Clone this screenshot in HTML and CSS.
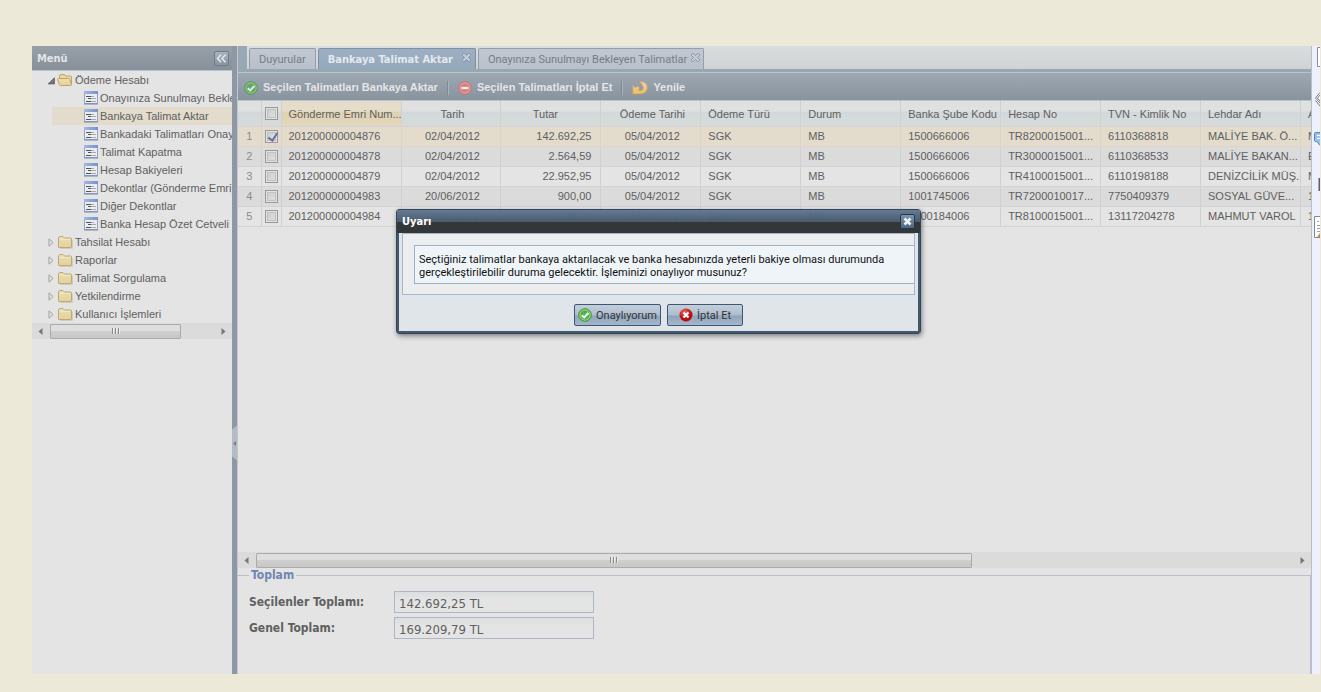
FILE: index.html
```html
<!DOCTYPE html>
<html lang="tr">
<head>
<meta charset="utf-8">
<title>Bankaya Talimat Aktar</title>
<link rel="stylesheet" href="styles.css">
</head>
<body>
<svg class="defs" width="0" height="0" aria-hidden="true">
  <defs>
    <linearGradient id="gold" x1="0" y1="0" x2="0" y2="1"><stop offset="0" stop-color="#e6e0b4"/><stop offset="1" stop-color="#e5d19c"/></linearGradient>
    <linearGradient id="blue" x1="0" y1="0" x2="1" y2="0"><stop offset="0" stop-color="#a3b8e2"/><stop offset="1" stop-color="#7890ce"/></linearGradient>
    <linearGradient id="orange" x1="0" y1="0" x2="0" y2="1"><stop offset="0" stop-color="#e4d3c0"/><stop offset="1" stop-color="#eac35c"/></linearGradient>
    <radialGradient id="redball" cx=".4" cy=".3"><stop offset="0" stop-color="#f06a5c"/><stop offset="1" stop-color="#b80c0c"/></radialGradient>
    <symbol id="folder" viewBox="0 0 16 16"><path d="M1.500 13V4q0-.5.500-1l.5-.5h3.500l1.500 1.500H13.500q1 0 1 1v8q0 .5-.5.500H2q-.5 0-.5-.5z" fill="url(#gold)" stroke="#c2a870"/><path d="M2.500 5.500h11" stroke="#f0e9c8"/><path d="M15.500 6v8.500H3" fill="none" stroke="#cfccc4"/></symbol>
    <symbol id="folder-open" viewBox="0 0 16 16"><path d="M2.500 13V4q0-1.500 1.500-1.500h3q1 0 1.500 1.500h5q1 0 1 1v8" fill="#e3d9a6" stroke="#c2a56c"/><path d="M.6 7.500q0-1 1-1h10q1 0 1.200 1l1.700 5q0 1-1 1h-10q-1 0-1.200-1z" fill="url(#gold)" stroke="#bfa464"/></symbol>
    <symbol id="form" viewBox="0 0 16 16"><path d="M1.500 1.500h13v12h-13z" fill="#e9ecf1" stroke="#96a4c2"/><path d="M1 1h14v3H1z" fill="url(#blue)"/><path d="M1 14h14" stroke="#7286ac"/><path d="M3 6.500h5M5 8.500h3M3 11.500h5" stroke="#555"/><path d="M8 6.500h3M8 8.500h5M8 11.500h5" stroke="#aaa"/></symbol>
    <symbol id="close" viewBox="0 0 9 9"><path d="M1.500.5h1l2 2 2-2h1l1 1v1l-2 2 2 2v1l-1 1h-1l-2-2-2 2h-1l-1-1v-1l2-2-2-2v-1z" fill="#c3ccd6" stroke="#77899c" stroke-width=".8"/></symbol>
    <symbol id="ok" viewBox="0 0 14 14"><circle cx="7" cy="7" r="6.300" fill="#54b14a" stroke="#3f9a38"/><circle cx="7" cy="7" r="5.200" fill="none" stroke="#a9dda2" stroke-width=".8"/><path d="M3.800 7.200l2.400 2.300 4.200-4.500" fill="none" stroke="#fff" stroke-width="1.900"/></symbol>
  </defs>
</svg>
<div class="app">
  <aside class="menu">
    <header class="menu-head"><h1>Menü</h1>
      <button class="fold" aria-label="Menüyü daralt"><svg width="11" height="9" viewBox="0 0 11 9"><path d="M5 .8L1.500 4.500 5 8.200M9.500.8L6 4.500l3.500 3.700" fill="none" stroke="#e4e8ec" stroke-width="1.500"/></svg></button>
    </header>
    <ul class="tree">
      <li><a href="#" class="branch"><svg class="arrow" viewBox="0 0 7 7"><path d="M6.500 1v5.500H1z" fill="#777" stroke="#555" stroke-width=".6"/></svg><svg class="ico"><use href="#folder-open"/></svg>Ödeme Hesabı</a>
        <ul>
          <li><a href="#"><svg class="ico"><use href="#form"/></svg>Onayınıza Sunulmayı Bekleyen Talimatlar</a></li>
          <li><a href="#" class="selected"><svg class="ico"><use href="#form"/></svg>Bankaya Talimat Aktar</a></li>
          <li><a href="#"><svg class="ico"><use href="#form"/></svg>Bankadaki Talimatları Onayla</a></li>
          <li><a href="#"><svg class="ico"><use href="#form"/></svg>Talimat Kapatma</a></li>
          <li><a href="#"><svg class="ico"><use href="#form"/></svg>Hesap Bakiyeleri</a></li>
          <li><a href="#"><svg class="ico"><use href="#form"/></svg>Dekontlar (Gönderme Emri)</a></li>
          <li><a href="#"><svg class="ico"><use href="#form"/></svg>Diğer Dekontlar</a></li>
          <li><a href="#"><svg class="ico"><use href="#form"/></svg>Banka Hesap Özet Cetveli</a></li>
        </ul>
      </li>
      <li><a href="#" class="branch"><svg class="arrow" viewBox="0 0 7 9"><path d="M1.500.8l4 3.700-4 3.700z" fill="none" stroke="#a0a0a0"/></svg><svg class="ico"><use href="#folder"/></svg>Tahsilat Hesabı</a></li>
      <li><a href="#" class="branch"><svg class="arrow" viewBox="0 0 7 9"><path d="M1.500.8l4 3.700-4 3.700z" fill="none" stroke="#a0a0a0"/></svg><svg class="ico"><use href="#folder"/></svg>Raporlar</a></li>
      <li><a href="#" class="branch"><svg class="arrow" viewBox="0 0 7 9"><path d="M1.500.8l4 3.700-4 3.700z" fill="none" stroke="#a0a0a0"/></svg><svg class="ico"><use href="#folder"/></svg>Talimat Sorgulama</a></li>
      <li><a href="#" class="branch"><svg class="arrow" viewBox="0 0 7 9"><path d="M1.500.8l4 3.700-4 3.700z" fill="none" stroke="#a0a0a0"/></svg><svg class="ico"><use href="#folder"/></svg>Yetkilendirme</a></li>
      <li><a href="#" class="branch"><svg class="arrow" viewBox="0 0 7 9"><path d="M1.500.8l4 3.700-4 3.700z" fill="none" stroke="#a0a0a0"/></svg><svg class="ico"><use href="#folder"/></svg>Kullanıcı İşlemleri</a></li>
    </ul>
    <div class="scroll">
      <svg class="tip" viewBox="0 0 5 7"><path d="M4.500 0v7L.5 3.500z" fill="#777"/></svg>
      <div class="track"><div class="thumb menu-thumb"><i></i><i></i><i></i></div></div>
      <svg class="tip" viewBox="0 0 5 7"><path d="M.5 0v7l4-3.500z" fill="#777"/></svg>
    </div>
  </aside>
  <div class="splitter"><button class="grip" aria-label="Daralt"><svg width="3" height="5" viewBox="0 0 3 5"><path d="M3 0v5L0 2.500z" fill="#75818d"/></svg></button></div>
  <main class="main">
    <nav class="tabs">
      <button class="tab">Duyurular</button>
      <button class="tab active">Bankaya Talimat Aktar<svg class="x"><use href="#close"/></svg></button>
      <button class="tab last">Onayınıza Sunulmayı Bekleyen Talimatlar<svg class="x"><use href="#close"/></svg></button>
    </nav>
    <div class="toolbar">
      <button><svg class="tool pale"><use href="#ok"/></svg>Seçilen Talimatları Bankaya Aktar</button>
      <span class="sep"></span>
      <button><svg class="tool" viewBox="0 0 14 14"><circle cx="7" cy="7" r="6.300" fill="#d58282" stroke="#c97070"/><circle cx="7" cy="7" r="5.200" fill="none" stroke="#e5b0ad" stroke-width=".8"/><path d="M3.500 7h7" stroke="#eee" stroke-width="2.200"/></svg>Seçilen Talimatları İptal Et</button>
      <span class="sep"></span>
      <button><svg class="tool wide" viewBox="0 0 16 14"><path d="M7.500.6Q15.200.4 15.400 6.300 15.200 12.600 8.300 13L.8 13V4.200L3.300 6.500Q4.800 5.400 5.800 5.200L7.800 7.200Q6.800 7.600 6.300 8.600L7.600 9.700Q11 9.400 11.200 7 11 4.200 7.500.6z" fill="url(#orange)" stroke="#cf9c5c" stroke-width=".8"/></svg>Yenile</button>
    </div>
    <div class="grid">
      <table>
        <colgroup><col class="c-num"><col class="c-check"><col class="c-order"><col><col><col><col><col><col><col><col><col><col></colgroup>
        <thead><tr><th></th><th class="check"><input type="checkbox" aria-label="Tümünü seç"></th><th class="sorted">Gönderme Emri Num...</th><th class="mid">Tarih</th><th class="amount">Tutar</th><th class="mid">Ödeme Tarihi</th><th>Ödeme Türü</th><th>Durum</th><th>Banka Şube Kodu</th><th>Hesap No</th><th>TVN - Kimlik No</th><th>Lehdar Adı</th><th>A</th></tr></thead>
        <tbody>
          <tr class="picked"><td class="num">1</td><td class="check"><input type="checkbox" aria-label="Satır 1" checked></td><td>201200000004876</td><td class="mid">02/04/2012</td><td class="right">142.692,25</td><td class="mid">05/04/2012</td><td>SGK</td><td>MB</td><td>1500666006</td><td>TR8200015001...</td><td>6110368818</td><td>MALİYE BAK. Ö...</td><td>M</td></tr>
          <tr class="alt"><td class="num">2</td><td class="check"><input type="checkbox" aria-label="Satır 2"></td><td>201200000004878</td><td class="mid">02/04/2012</td><td class="right">2.564,59</td><td class="mid">05/04/2012</td><td>SGK</td><td>MB</td><td>1500666006</td><td>TR3000015001...</td><td>6110368533</td><td>MALİYE BAKAN...</td><td>E</td></tr>
          <tr><td class="num">3</td><td class="check"><input type="checkbox" aria-label="Satır 3"></td><td>201200000004879</td><td class="mid">02/04/2012</td><td class="right">22.952,95</td><td class="mid">05/04/2012</td><td>SGK</td><td>MB</td><td>1500666006</td><td>TR4100015001...</td><td>6110198188</td><td>DENİZCİLİK MÜŞ...</td><td>M</td></tr>
          <tr class="alt"><td class="num">4</td><td class="check"><input type="checkbox" aria-label="Satır 4"></td><td>201200000004983</td><td class="mid">20/06/2012</td><td class="right">900,00</td><td class="mid">05/04/2012</td><td>SGK</td><td>MB</td><td>1001745006</td><td>TR7200010017...</td><td>7750409379</td><td>SOSYAL GÜVE...</td><td>1</td></tr>
          <tr><td class="num">5</td><td class="check"><input type="checkbox" aria-label="Satır 5"></td><td>201200000004984</td><td class="mid">20/06/2012</td><td class="right">100,00</td><td class="mid">05/04/2012</td><td>Diğer</td><td>MB</td><td>1500184006</td><td>TR8100015001...</td><td>13117204278</td><td>MAHMUT VAROL</td><td>1</td></tr>
        </tbody>
      </table>
    </div>
    <div class="scroll">
      <svg class="tip" viewBox="0 0 5 7"><path d="M4.500 0v7L.5 3.500z" fill="#777"/></svg>
      <div class="track"><div class="thumb grid-thumb"><i></i><i></i><i></i></div></div>
      <svg class="tip" viewBox="0 0 5 7"><path d="M.5 0v7l4-3.500z" fill="#777"/></svg>
    </div>
    <fieldset class="totals">
      <legend>Toplam</legend>
      <label for="sel">Seçilenler Toplamı:</label><input id="sel" type="text" value="142.692,25 TL" readonly>
      <label for="all">Genel Toplam:</label><input id="all" type="text" value="169.209,79 TL" readonly>
    </fieldset>
  </main>
  <div class="side">
    <svg width="8" height="24" viewBox="0 0 8 24"><path d="M8 1.500H5.500v19H8" fill="#fff" stroke="#8a8f98"/></svg>
    <svg width="8" height="24" viewBox="0 0 8 24"><path d="M8 4.500L3.500 10 8 15M3.500 12.500L8 18M8 7L5.500 10 8 13" fill="#fff" stroke="#777"/></svg>
    <svg width="8" height="24" viewBox="0 0 8 24"><path d="M8 2.500H3.500q-1 0-1 1v7q0 1 1 1h1.500l3 4" fill="#9cc0f0" stroke="#4c86cf"/><path d="M5 5.500h3M5 8.500h3" stroke="#fff"/></svg>
    <svg width="8" height="24" viewBox="0 0 8 24"><path d="M7.500 6v13" stroke="#55607a" stroke-width="2"/></svg>
    <svg width="8" height="24" viewBox="0 0 8 24"><path d="M8 2.500H2.500v21H8" fill="#fff" stroke="#888"/><path d="M5 7.500h2M5 11.500h3M5 14.500h3M5 17.500h3" stroke="#8aa4cc"/><path d="M8 19l-3 4h3z" fill="#d58b35"/></svg>
  </div>
</div>
<section class="dialog" role="dialog" aria-labelledby="dlg-title">
  <header><h2 id="dlg-title">Uyarı</h2><button class="dlg-close" aria-label="Kapat"><svg width="9" height="9" viewBox="0 0 9 9"><path d="M1.500 1.500l6 6M7.500 1.500l-6 6" stroke="#eef2f6" stroke-width="2.600"/></svg></button></header>
  <div class="dlg-main">
    <div class="dlg-body"><p>Seçtiğiniz talimatlar bankaya aktarılacak ve banka hesabınızda yeterli bakiye olması durumunda<br>gerçekleştirilebilir duruma gelecektir. İşleminizi onaylıyor musunuz?</p></div>
    <footer>
      <button><svg class="tool"><use href="#ok"/></svg>Onaylıyorum</button>
      <button class="cancel"><svg class="tool" viewBox="0 0 14 14"><circle cx="7" cy="7" r="6.500" fill="url(#redball)"/><path d="M4.500 4.500l5 5M9.500 4.500l-5 5" stroke="#fff" stroke-width="2.200"/></svg>İptal Et</button>
    </footer>
  </div>
</section>
</body>
</html>
```
FILE: styles.css
```css
* { box-sizing: border-box; }
body {
  margin: 0;
  background: #ece9d8;
  color: #606060;
  font: 11px/13px "Liberation Sans", Arial, sans-serif;
}
.defs { position: absolute; }
button { font: inherit; color: inherit; margin: 0; padding: 0; border: 0; background: none; }
a { color: inherit; text-decoration: none; }
h1, h2, p { margin: 0; }
.app {
  display: grid;
  grid-template-columns: 200px 5px minmax(0, 1fr) 8px;
  height: 100vh;
  padding: 46px 1px 18px 32px;
}

/* Menu */
.menu { background: #e4e4e4; overflow: hidden; }
.menu-head {
  display: flex;
  align-items: center;
  justify-content: space-between;
  height: 25px;
  padding: 0 3px 0 5px;
  background: linear-gradient(#98a0a9, #878f98);
  border-bottom: 1px solid #b4c4d2;
}
h1 { padding-top: 2px; font: bold 11px/14px "DejaVu Sans Condensed", "DejaVu Sans", sans-serif; color: #e3e5e8; }
.fold {
  display: grid;
  place-items: center;
  width: 15px;
  height: 15px;
  border: 1px solid #6f7d8c;
  border-radius: 2px;
  background: linear-gradient(#a9b4be, #8795a2);
}
.tree, .tree ul { list-style: none; margin: 0; padding: 0; }
.tree a { display: flex; align-items: center; height: 18px; white-space: nowrap; }
.tree ul a { margin-left: 20px; padding-left: 31px; gap: 1px; }
.tree .branch { padding-left: 15px; gap: 2px; }
.tree .selected { background: #e3dccd; }
.arrow { width: 8px; height: 9px; }
.ico { width: 16px; height: 16px; flex: none; }

/* Scroll bars */
.scroll {
  display: flex;
  align-items: center;
  height: 16px;
  padding: 0 6px;
  gap: 7px;
  background: #dbdbdb;
}
.tip { width: 5px; height: 7px; flex: none; }
.track { flex: 1; }
.thumb {
  display: flex;
  align-items: center;
  justify-content: center;
  gap: 1px;
  height: 15px;
  border: 1px solid #ababab;
  border-radius: 1px;
  background: linear-gradient(#dedede 45%, #cecece 50%, #c8c8c8);
}
.thumb i { width: 2px; height: 6px; border-left: 1px solid #888; background: #eee; }
.menu-thumb { width: 80%; }
.grid-thumb { width: 69%; }

.splitter { display: flex; align-items: center; background: #8e98a3; }
.grip {
  display: grid;
  place-items: center;
  width: 5px;
  height: 35px;
  margin-top: 166px;
  background: #b4bbc2;
  clip-path: polygon(0 4px, 100% 0, 100% 100%, 0 31px);
}

/* Work area */
.main {
  display: flex;
  flex-direction: column;
  background: #e4e4e4;
  border-left: 1px solid #c0c7d2;
  border-right: 1px solid #b9bec8;
  overflow: hidden;
}
.tabs {
  display: flex;
  align-items: flex-end;
  gap: 2px;
  height: 26px;
  padding: 0 0 0 2px;
  border-left: 9px solid #98a8b6;
  border-bottom: 3px solid #98a8b2;
  background: linear-gradient(#dadddd, #d0d3d3);
  font-family: Roboto, "DejaVu Sans", sans-serif;
}
.tab {
  display: flex;
  align-items: center;
  gap: 4px;
  height: 21px;
  padding: 0 9px;
  border: 1px solid #939eab;
  border-bottom: 0;
  border-radius: 2px 2px 0 0;
  background: linear-gradient(#c2c8d1, #b9c0cb);
  color: #777d86;
  white-space: nowrap;
}
.tab.active {
  gap: 9px;
  padding-right: 4px;
  border-color: #7f90a2;
  background: linear-gradient(#9eafc4, #93a9bb);
  color: #e5e8ec;
  font-family: "DejaVu Sans Condensed", "DejaVu Sans", sans-serif;
  font-weight: bold;
}
.tab.last { padding-right: 3px; }
.x { width: 9px; height: 9px; margin-bottom: 4px; }
.toolbar {
  display: flex;
  align-items: center;
  gap: 9px;
  height: 29px;
  padding: 2px 6px 0;
  border-top: 1px solid #b8c4cd;
  border-bottom: 1px solid #b8c4cd;
  background: linear-gradient(#9ea8b3, #89939e);
  color: #e3e5e8;
  font-weight: bold;
}
.toolbar button { display: flex; align-items: center; gap: 5px; white-space: nowrap; }
.tool { width: 14px; height: 14px; flex: none; }
.tool.wide { width: 16px; }
.tool.pale { opacity: .75; }
.sep { width: 2px; height: 14px; background: #808994; border-right: 1px solid #a9b3bd; }

/* Grid */
.grid { flex: 1; overflow: hidden; }
table { width: 1163px; table-layout: fixed; border-collapse: collapse; }
.c-num { width: 23px; }
.c-check { width: 20px; }
.c-order { width: 120px; }
th, td {
  padding: 0 0 0 7px;
  border-right: 1px solid #d0d0d0;
  border-bottom: 1px solid #d3d3d3;
  font-weight: normal;
  text-align: left;
  white-space: nowrap;
  overflow: hidden;
}
th { height: 25px; padding-top: 2px; background: linear-gradient(#dfe0e0 40%, #d3d9da 45%, #d6dadb); }
td { height: 20px; }
.sorted { background: linear-gradient(#e5ddca 40%, #dfd2b2 45%, #e1d7bd); }
.alt td { background: #dbdbdb; }
.picked td { background: #e3dccd; border-color: #dcd5c8; }
.mid { padding-right: 4px; text-align: center; }
.amount { padding-right: 18px; text-align: center; }
td.right { padding-right: 9px; text-align: right; }
td.num { padding: 0; color: #8a8a8a; text-align: center; }
.check { padding: 0; text-align: center; }
.check input {
  appearance: none;
  display: block;
  width: 13px;
  height: 13px;
  margin: 0 auto;
  border: 1px solid #999;
  background: linear-gradient(135deg, #c8c8c8, #e4e4e4);
  box-shadow: inset 0 0 0 1px #e2e2e2, inset 0 0 0 2px #bfc0c2;
}
.check input:checked::before {
  content: "";
  display: block;
  width: 4px;
  height: 8px;
  margin: 0 0 0 4px;
  border: solid #60719c;
  border-width: 0 2px 2px 0;
  transform: rotate(35deg);
}

/* Totals */
.totals {
  display: grid;
  grid-template-columns: 145px 200px;
  align-content: start;
  row-gap: 4px;
  height: 106px;
  margin: 0;
  padding: 9px 11px;
  border: 1px solid #b9c0cb;
  border-width: 1px 1px 0 0;
  font: bold 12px/14px "DejaVu Sans Condensed", "DejaVu Sans", sans-serif;
}
.totals legend { padding: 0 2px; color: #7086b2; }
.totals label { padding-top: 4px; }
.totals input {
  height: 22px;
  padding: 3px 4px 0;
  border: 1px solid #aeb7c4;
  background: linear-gradient(#dbdedf, #e4e4e4 40%);
  color: #606060;
  font: 13px/16px "DejaVu Sans Condensed", "DejaVu Sans", sans-serif;
}

.side { display: flex; flex-direction: column; gap: 18px; background: #edf0ff; overflow: hidden; }

/* Confirmation window */
.dialog {
  position: absolute;
  left: 396px;
  top: 209px;
  width: 525px;
  border: 1px solid #33475c;
  border-radius: 3px;
  box-shadow: 1px 2px 5px rgba(0, 0, 0, .45);
}
.dialog header {
  display: flex;
  align-items: center;
  justify-content: space-between;
  height: 23px;
  padding: 0 5px;
  background: linear-gradient(rgba(96, 120, 146, .97), rgba(70, 86, 106, .97) 12px, #343638 12px, #343638);
}
h2 { font: bold 11px/14px "DejaVu Sans Condensed", "DejaVu Sans", sans-serif; color: #fff; }
.dlg-close {
  display: grid;
  place-items: center;
  width: 15px;
  height: 15px;
  border: 1px solid #24384d;
  border-radius: 2px;
  background: linear-gradient(#7f95aa, #4d6780);
}
.dlg-main { padding: 0 3px; border: 2px solid #43586e; border-width: 0 2px 2px; background: #e0e5e9; }
.dlg-body { padding: 11px 0 10px 11px; border: 1px solid #a5b6c9; background: #ecedef; }
.dlg-body p {
  padding: 7px 4px 4px;
  border: 1px solid #a0b0c0;
  border-right: 0;
  background: #eef4f8;
  color: #111;
  font: 11px/13px Roboto, "DejaVu Sans", sans-serif;
}
.dialog footer { display: flex; justify-content: center; gap: 6px; padding: 9px 0 5px; }
.dialog footer button {
  display: flex;
  align-items: center;
  gap: 4px;
  height: 22px;
  padding: 0 3px;
  border: 1px solid #3c5874;
  border-radius: 2px;
  background: linear-gradient(#c3cedb, #aebdce 50%, #8fa4bb 55%, #a5b7ca);
  color: #333;
  font-family: Roboto, "DejaVu Sans", sans-serif;
}
.dialog footer .cancel { padding: 0 11px; }
```
